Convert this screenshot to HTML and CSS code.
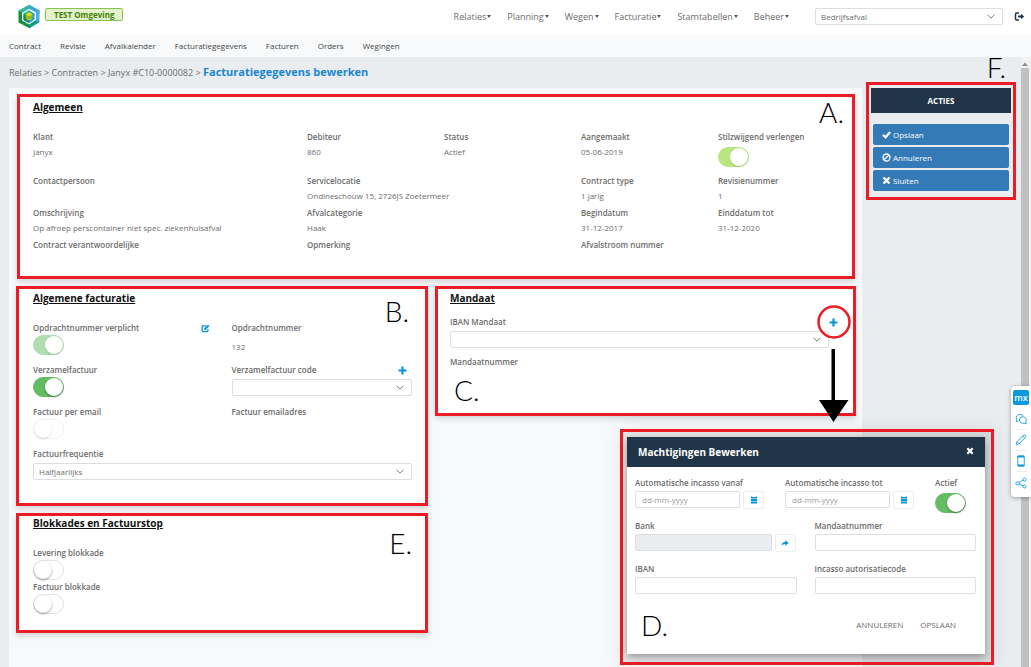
FILE: index.html
```html
<!DOCTYPE html>
<html lang="nl">
<head>
<meta charset="utf-8">
<meta name="viewport" content="width=device-width, initial-scale=1">
<title>Facturatiegegevens bewerken</title>
<link rel="stylesheet" href="styles.css">
</head>
<body>
<svg class="defs" width="0" height="0" aria-hidden="true">
  <symbol id="chevron" viewBox="0 0 8 5"><path d="M.5.7 4 4.2 7.500.7" fill="none" stroke="currentColor" stroke-width="1"/></symbol>
  <symbol id="plus" viewBox="0 0 9 9"><path d="M3.400.5h2.200v2.900h2.900v2.200H5.600v2.900H3.400V5.600H.5V3.400h2.900z" fill="currentColor"/></symbol>
  <symbol id="cross" viewBox="0 0 9 9"><path d="m1.500 1.500 6 6m0-6-6 6" stroke="currentColor" stroke-width="2.400" fill="none"/></symbol>
  <symbol id="calendar" viewBox="0 0 8 8"><path d="M1 .5h1.200V1h3.600V.5H7v2H1zM1 3h6v2H1zM1 5.500h6v2H1z" fill="currentColor"/></symbol>
</svg>
<header class="topbar">
  <svg class="logo" viewBox="0 0 22 24" role="img" aria-label="Logo">
    <path d="M11 .2 21.500 6 11 4.500 4 8.500.5 6z" fill="#35b5a0"/>
    <path d="M11 .2 21.500 6v4L11 4.200z" fill="#3fa3de"/>
    <path d="M21.500 6v11.500L13 22.500v-4l5-3V8z" fill="#48aae6"/>
    <path d="M.5 6 4 8v8l8 4.500V24L.5 18z" fill="#12903c"/>
    <path d="m11 20 7-4 3.500 1.500L11 24z" fill="#0c9c84"/>
    <path d="m5.500 9 5.500-3.200L16.500 9v2L11 8l-3 1.700V17l-2.500-1.500z" fill="#25b08b"/>
    <path d="M5.500 9v6.500L11 18.700V16l-3-1.700V10z" fill="#0d8c50"/>
    <path d="M16.500 9v6L11 18.700V16l3-1.700V9z" fill="#2c9bd8"/>
    <path d="m11 8 3.500 2v3.700L11 15.700l-3.500-2V10z" fill="#8fb71e"/>
    <path d="m11 8 3.500 2L11 12l-3.500-2z" fill="#d9df1e"/>
  </svg>
  <span class="env">TEST Omgeving</span>
  <nav class="menu" aria-label="Hoofdmenu">
    <button type="button">Relaties</button>
    <button type="button">Planning</button>
    <button type="button">Wegen</button>
    <button type="button">Facturatie</button>
    <button type="button">Stamtabellen</button>
    <button type="button">Beheer</button>
  </nav>
  <div class="select company">
    <select aria-label="Bedrijf"><option>Bedrijfsafval</option></select>
    <svg class="chev"><use href="#chevron"/></svg>
  </div>
  <button class="logout" type="button" aria-label="Uitloggen">
    <svg viewBox="0 0 10 9"><path d="M4.500 1H2.200Q1 1 1 2.200v4.600Q1 8 2.200 8h2.300" fill="none" stroke="currentColor" stroke-width="1.500"/><path d="M3.500 3.500h3V1.700l3.200 2.800-3.200 2.800V5.500h-3z" fill="currentColor"/></svg>
  </button>
</header>
<nav class="subnav" aria-label="Contract">
  <a href="#">Contract</a><a href="#">Revisie</a><a href="#">Afvalkalender</a><a href="#">Facturatiegegevens</a><a href="#">Facturen</a><a href="#">Orders</a><a href="#">Wegingen</a>
</nav>
<div class="workspace">
  <div class="page">
    <div class="crumbs">Relaties &gt; Contracten &gt; Janyx #C10-0000082 &gt; <h1>Facturatiegegevens bewerken</h1></div>
    <main class="panel">
      <section class="card general">
        <span class="mark mark-a">A.</span>
        <h2>Algemeen</h2>
        <dl class="facts">
          <div class="wide"><dt>Klant</dt><dd>Janyx</dd></div>
          <div><dt>Debiteur</dt><dd>860</dd></div>
          <div><dt>Status</dt><dd>Actief</dd></div>
          <div><dt>Aangemaakt</dt><dd>05-06-2019</dd></div>
          <div><dt><label for="verlengen">Stilzwijgend verlengen</label></dt><dd><input class="toggle lime" id="verlengen" type="checkbox" checked></dd></div>
          <div class="wide"><dt>Contactpersoon</dt></div>
          <div class="wide"><dt>Servicelocatie</dt><dd>Ondineschouw 15, 2726JS Zoetermeer</dd></div>
          <div><dt>Contract type</dt><dd>1 jarig</dd></div>
          <div><dt>Revisienummer</dt><dd>1</dd></div>
          <div class="wide"><dt>Omschrijving</dt><dd>Op afroep perscontainer niet spec. ziekenhuisafval</dd></div>
          <div class="wide"><dt>Afvalcategorie</dt><dd>Haak</dd></div>
          <div><dt>Begindatum</dt><dd>31-12-2017</dd></div>
          <div><dt>Einddatum tot</dt><dd>31-12-2020</dd></div>
          <div class="wide"><dt>Contract verantwoordelijke</dt></div>
          <div class="wide"><dt>Opmerking</dt></div>
          <div><dt>Afvalstroom nummer</dt></div>
        </dl>
      </section>
      <div class="columns">
        <div class="stack">
          <section class="card billing">
            <span class="mark mark-b">B.</span>
            <h2>Algemene facturatie</h2>
            <div class="form">
              <div class="field">
                <div class="labelrow"><label for="verplicht">Opdrachtnummer verplicht</label>
                  <button class="iconbtn edit" type="button" aria-label="Bewerken"><svg viewBox="0 0 10 9"><path d="M6 1.500H2.200Q1.200 1.500 1.200 2.500v4.500q0 1 1 1h4.500q1 0 1-1V5" fill="none" stroke="currentColor" stroke-width="1.400"/><path d="M3.500 6.200V4.500L7.800.3l1.600 1.500-4.300 4.400z" fill="currentColor"/></svg></button></div>
                <input class="toggle soft" id="verplicht" type="checkbox" checked>
              </div>
              <div class="field"><span class="label">Opdrachtnummer</span><span class="value">132</span></div>
              <div class="field"><label for="verzamel">Verzamelfactuur</label><input class="toggle" id="verzamel" type="checkbox" checked></div>
              <div class="field">
                <div class="labelrow"><label for="code">Verzamelfactuur code</label>
                  <button class="iconbtn add" type="button" aria-label="Toevoegen"><svg><use href="#plus"/></svg></button></div>
                <div class="select"><select id="code"><option></option></select><svg class="chev"><use href="#chevron"/></svg></div>
              </div>
              <div class="field"><label for="email">Factuur per email</label><input class="toggle faint" id="email" type="checkbox"></div>
              <div class="field"><span class="label">Factuur emailadres</span></div>
              <div class="field full"><label for="freq">Factuurfrequentie</label>
                <div class="select"><select id="freq"><option>Halfjaarlijks</option></select><svg class="chev"><use href="#chevron"/></svg></div>
              </div>
            </div>
          </section>
          <section class="card blocks">
            <span class="mark mark-e">E.</span>
            <h2>Blokkades en Factuurstop</h2>
            <div class="field"><label for="levering">Levering blokkade</label><input class="toggle" id="levering" type="checkbox"></div>
            <div class="field"><label for="factuur">Factuur blokkade</label><input class="toggle" id="factuur" type="checkbox"></div>
          </section>
        </div>
        <section class="card mandate">
          <h2>Mandaat</h2>
          <div class="mandate-grid">
            <label for="iban-mandaat">IBAN Mandaat</label>
            <button class="iconbtn" type="button" aria-label="Mandaat toevoegen"><svg><use href="#plus"/></svg></button>
            <div class="select"><select id="iban-mandaat"><option></option></select><svg class="chev"><use href="#chevron"/></svg></div>
          </div>
          <span class="label">Mandaatnummer</span>
          <span class="mark mark-c">C.</span>
          <svg class="pointer" viewBox="0 0 34 118" aria-hidden="true">
            <circle cx="17" cy="17" r="15.500" fill="none" stroke="#ed1c24" stroke-width="2.500"/>
            <path d="M14.500 44h3.500v51h13.500L16.500 117 2 95h12.500z" fill="#000"/>
          </svg>
        </section>
      </div>
    </main>
  </div>
  <aside class="side">
    <span class="mark mark-f">F.</span>
    <div class="actions">
      <h2>ACTIES</h2>
      <button type="button"><svg viewBox="0 0 9 9"><path d="m1 4.800 2.500 2.500L8.200 2" fill="none" stroke="currentColor" stroke-width="2.200"/></svg>Opslaan</button>
      <button type="button"><svg viewBox="0 0 9 9"><path d="M1.900 6.800 7 2" stroke="currentColor" stroke-width="1.300"/><circle cx="4.500" cy="4.500" r="3.500" fill="none" stroke="currentColor" stroke-width="1.300"/></svg>Annuleren</button>
      <button type="button"><svg><use href="#cross"/></svg>Sluiten</button>
    </div>
  </aside>
  <div class="scrollbar" aria-hidden="true"><svg viewBox="0 0 6 4"><path d="m0 4 3-3.500L6 4z" fill="#8c8c8c"/></svg><i></i></div>
</div>
<div class="frame">
  <div class="modal" role="dialog" aria-labelledby="modal-title">
    <div class="modal-head"><h2 id="modal-title">Machtigingen Bewerken</h2><button type="button" aria-label="Sluiten"><svg><use href="#cross"/></svg></button></div>
    <div class="modal-body">
      <div class="row dates">
        <div class="field"><label for="vanaf">Automatische incasso vanaf</label>
          <div class="group"><input id="vanaf" type="text" placeholder="dd-mm-yyyy"><button type="button" aria-label="Kalender"><svg><use href="#calendar"/></svg></button></div></div>
        <div class="field"><label for="tot">Automatische incasso tot</label>
          <div class="group"><input id="tot" type="text" placeholder="dd-mm-yyyy"><button type="button" aria-label="Kalender"><svg><use href="#calendar"/></svg></button></div></div>
        <div class="field"><label for="actief">Actief</label><input class="toggle" id="actief" type="checkbox" checked></div>
      </div>
      <div class="row halves">
        <div class="field"><label for="bank">Bank</label>
          <div class="group"><input id="bank" type="text" disabled><button type="button" aria-label="Bank kiezen"><svg viewBox="0 0 8 8"><path d="M.6 6.500Q.6 3 4.300 3V1.300L7.700 4 4.300 6.700V5Q2 4.800.6 6.500z" fill="currentColor"/></svg></button></div></div>
        <div class="field"><label for="mnummer">Mandaatnummer</label><input id="mnummer" type="text"></div>
      </div>
      <div class="row halves">
        <div class="field"><label for="iban">IBAN</label><input id="iban" type="text"></div>
        <div class="field"><label for="auth">Incasso autorisatiecode</label><input id="auth" type="text"></div>
      </div>
    </div>
    <div class="modal-foot"><span class="mark">D.</span><button type="button">ANNULEREN</button><button type="button">OPSLAAN</button></div>
  </div>
</div>
<div class="tools">
  <button class="mx" type="button">mx</button>
  <button type="button" aria-label="Chat"><svg viewBox="0 0 14 14"><path d="M4 9.500 1.500 10l.7-2Q.5 5.500 2 3.500T6 1.500t4 2M6.500 11Q4.500 9.500 5.200 7T9 4.500 13 7t-.5 3.500l.7 2-2.500-.6Q8.500 12.500 6.500 11z"/></svg></button>
  <button type="button" aria-label="Bewerken"><svg viewBox="0 0 14 14"><path d="m1.500 12.500.8-3.500L10 1.300q1-.8 2 .2t.3 2.200L4.800 11.500zM9 2.500l2.500 2.400M2.300 9l2.500 2.500"/></svg></button>
  <button type="button" aria-label="Mobiel"><svg viewBox="0 0 14 14"><path d="M4 1h6q.8 0 .8.800v10.400q0 .8-.8.800H4q-.8 0-.8-.8V1.800Q3.200 1 4 1z"/><path d="M3.200 2h7.600M3.200 12h7.600" stroke-width="2"/></svg></button>
  <button type="button" aria-label="Delen"><svg viewBox="0 0 14 14"><circle cx="3" cy="7.500" r="2"/><circle cx="11" cy="3" r="1.800"/><circle cx="11" cy="11" r="1.800"/><path d="m4.800 6.500 4.600-2.700M4.900 8.300l4.500 2"/></svg></button>
</div>
</body>
</html>
```
FILE: styles.css
```css
* { box-sizing: border-box; }
body {
  position: relative;
  display: flex;
  flex-direction: column;
  min-height: 100vh;
  margin: 0;
  background: #e9edf0;
  color: #6c6c6c;
  font: 8px/16px "Open Sans", "Noto Sans", sans-serif;
}
h1, h2, dl, dd { margin: 0; }
button, input, select { margin: 0; font: inherit; color: inherit; }
button { padding: 0; border: 0; background: none; cursor: pointer; }
.defs { position: absolute; }
svg { display: block; }

.topbar { display: flex; align-items: center; height: 35px; padding: 0 6px 2px 18px; background: #fff; }
.logo { width: 22px; height: 25px; }
.env {
  margin: 0 auto 4px 5px;
  padding: 0 8px;
  border: 1px solid #8cc152;
  border-radius: 2px;
  background: #e2f3cb;
  color: #44800a;
  font-weight: 700;
  line-height: 11px;
}
.menu { display: flex; gap: 16px; font-size: 9px; }
.menu button::after {
  content: "";
  display: inline-block;
  margin-left: 1px;
  vertical-align: 2px;
  border: 2px solid transparent;
  border-top: 3px solid #555;
  border-bottom: 0;
}
.select { position: relative; display: block; }
.select select {
  display: block;
  width: 100%;
  height: 17px;
  padding: 0 20px 0 5px;
  appearance: none;
  border: 1px solid #dcdfe2;
  border-radius: 2px;
  background: #fff;
}
.chev { position: absolute; right: 8px; top: 6px; width: 8px; height: 5px; color: #777; pointer-events: none; }
.company { width: 188px; margin: 0 11px 0 26px; }
.logout { color: #1f3446; }
.logout svg { width: 11px; height: 9px; }

.subnav { display: flex; align-items: center; gap: 19px; height: 22px; padding-left: 9px; background: #f8f9fb; }
.subnav a { color: #444; text-decoration: none; }

.workspace { flex: 1; display: flex; }
.page { flex: 1; display: flex; flex-direction: column; min-width: 0; padding-left: 9px; }
.crumbs { height: 31px; font-size: 9px; line-height: 30px; white-space: nowrap; }
.crumbs h1 { display: inline; color: #1b86d0; font-size: 11px; font-weight: 700; }
.panel { flex: 1; padding: 6px 6px 0 7px; background: #f8f9fb; }
.card { position: relative; border: 3px solid #ed1c24; background: #fff; box-shadow: 0 3px 6px rgba(0, 0, 0, .15); }
.card h2 { width: fit-content; color: #111; font-size: 10px; font-weight: 700; line-height: 14px; text-decoration: underline; }
.mark { color: #000; font: 300 28px/28px Lato, "Open Sans", sans-serif; }

.general { margin: 0 1px 7px; padding: 3px 0 24px 13px; }
.mark-a { position: absolute; right: 8px; top: 1px; }
.facts { display: grid; grid-template-columns: repeat(5, 137fr) 134fr; gap: 3px 0; margin-top: 16px; }
.facts .wide { grid-column: span 2; }
.facts dd { line-height: 15px; }
.facts .toggle { margin-top: 3px; margin-bottom: 4px; }
dt, label, .label { display: block; font-weight: 600; line-height: 14px; }

.toggle {
  display: block;
  width: 31px;
  height: 20px;
  appearance: none;
  border: 1px solid #e3e3e3;
  border-radius: 10px;
  background: #fff;
}
.toggle::before {
  content: "";
  display: block;
  width: 18px;
  height: 18px;
  border-radius: 50%;
  background: #fff;
  box-shadow: 0 1px 2px rgba(0, 0, 0, .4);
}
.toggle:checked { border-color: #64bd63; background: #64bd63; }
.toggle:checked::before { margin-left: 11px; }
.toggle.lime:checked { border-color: #b9e681; background: #b9e681; }
.toggle.soft:checked { border-color: #b1deb1; background: #b1deb1; }
.toggle.lime::before, .toggle.soft::before, .toggle.faint::before { box-shadow: 0 1px 2px rgba(0, 0, 0, .15); }
.toggle.faint { border-color: #f2f2f2; }

.columns { display: grid; grid-template-columns: 412fr 421fr; gap: 7px; align-items: start; }
.stack { display: grid; gap: 7px; }
.billing { padding: 2px 13px 23px 14px; }
.form { display: grid; grid-template-columns: 1fr 1fr; gap: 8px 18px; margin-top: 16px; }
.form .full { grid-column: 1 / -1; }
.form .select { margin-top: 2px; }
.form .value { display: block; margin-top: 4px; }
.labelrow { display: flex; justify-content: space-between; align-items: center; }
.iconbtn { color: #0595db; }
.iconbtn svg { width: 9px; height: 9px; }
.edit { margin-right: 4px; }
.add { margin-right: 5px; }
.mark-b { position: absolute; right: 16px; top: 8px; }
.blocks { padding: 0 0 16px 14px; }
.blocks h2 { margin-bottom: 16px; }
.mark-e { position: absolute; right: 13px; top: 13px; }
.mandate { min-height: 130px; padding: 2px 15px 0 12px; }
.mandate-grid { display: grid; grid-template-columns: 1fr 9px; row-gap: 2px; margin: 10px 0 7px; align-items: center; }
.mark-c { position: absolute; left: 16px; top: 87px; }
.pointer { position: absolute; right: 2px; top: 16px; width: 34px; height: 118px; pointer-events: none; }

.side { width: 150px; margin: 0 5px 0 4px; }
.mark-f { display: block; padding-right: 10px; margin-bottom: 4px; line-height: 21px; text-align: right; }
.actions { display: grid; gap: 2px; padding: 3px 4px 6px; border: 3px solid #ed1c24; }
.actions h2 { margin: 0 -2px 9px; background: #203547; color: #fff; font-size: 8px; font-weight: 700; line-height: 25px; text-align: center; }
.actions button { display: flex; align-items: center; gap: 2px; height: 21px; padding-left: 9px; border-radius: 2px; background: #337ab7; color: #fff; }
.actions svg { width: 9px; height: 9px; }
.scrollbar { width: 10px; padding: 5px 2px 0 0; background: #f1f1f1; }
.scrollbar svg { width: 6px; height: 4px; margin: 0 auto 2px; }
.scrollbar i { display: block; height: calc(100% - 6px); background: #c1c1c1; }

.frame { position: absolute; right: 37px; top: 429px; width: 374px; padding: 5px 6px 8px 4px; border: 3px solid #ed1c24; background: rgba(0, 0, 0, .08); box-shadow: 0 0 20px rgba(0, 0, 0, .08); }
.modal { background: #fff; box-shadow: 0 3px 8px rgba(0, 0, 0, .35); }
.modal-head { display: flex; justify-content: space-between; align-items: center; height: 30px; padding: 0 11px; background: #203547; color: #fff; }
.modal-head h2 { font-size: 10px; font-weight: 700; }
.modal-head svg { width: 8px; height: 8px; margin-bottom: 3px; }
.modal-body { display: grid; grid-auto-rows: 37px; gap: 6px; padding: 9px 9px 0 8px; }
.row { display: grid; }
.dates { grid-template-columns: 130fr 130fr 41fr; column-gap: 20px; }
.halves { grid-template-columns: 1fr 1fr; column-gap: 18px; }
.modal-body label { white-space: nowrap; }
.modal-body .toggle { margin-top: 3px; }
.modal-body input[type="text"] { display: block; width: 100%; height: 17px; margin-top: 1px; padding: 0 6px; border: 1px solid #dcdfe2; border-radius: 2px; background: #fff; }
.modal-body input::placeholder { color: #999; opacity: 1; }
.modal-body input[type="text"]:disabled { background: #e9edf0; }
.group { display: flex; gap: 3px; margin-right: 1px; }
.group button { flex: none; display: grid; place-items: center; width: 21px; height: 18px; margin-top: 1px; border: 1px solid #eee; border-radius: 2px; color: #0595db; }
.group svg { width: 8px; height: 8px; }
.modal-foot { display: flex; align-items: center; gap: 17px; padding: 12px 29px 15px 14px; }
.modal-foot .mark { margin-right: auto; }

.tools { position: absolute; right: 0; top: 386px; display: grid; width: 20px; padding: 4px 2px; border-radius: 4px 0 0 4px; background: #fff; box-shadow: 0 1px 4px rgba(0, 0, 0, .35); color: #0a99de; }
.tools button { display: grid; place-items: center; height: 21px; margin: 0 2px; border-bottom: 1px solid #eee; }
.tools button:last-child { border-bottom: 0; }
.tools svg { width: 12px; height: 12px; fill: none; stroke: currentColor; }
.tools .mx { height: 15px; margin: 0 0 4px; border: 0; border-radius: 2px; background: #0a99de; color: #fff; font-size: 9px; font-weight: 600; line-height: 12px; }
```
